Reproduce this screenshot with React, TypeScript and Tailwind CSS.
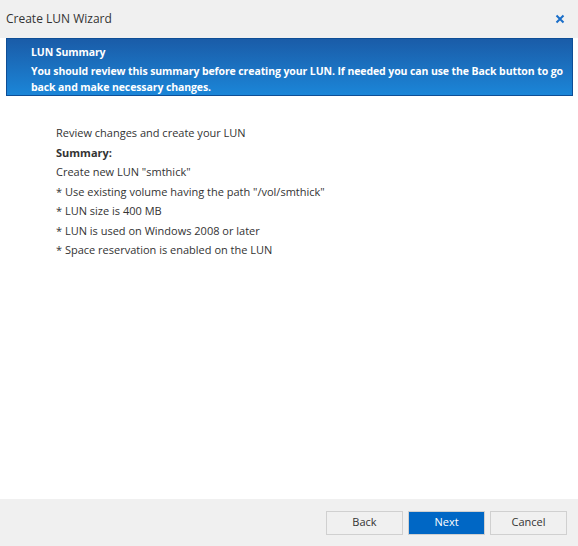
import React from 'react';

const summaryLines = [
  'Create new LUN "smthick"',
  '* Use existing volume having the path "/vol/smthick"',
  '* LUN size is 400 MB',
  '* LUN is used on Windows 2008 or later',
  '* Space reservation is enabled on the LUN',
];

export default function App() {
  return (
    <div
      className="flex h-[546px] w-[578px] flex-col bg-white text-[#333]"
      style={{ fontFamily: '"Open Sans", "Noto Sans", sans-serif' }}
    >
      <div className="flex h-[38px] items-center justify-between bg-[#f0f0f0] pl-[6px] pr-[13px]">
        <span className="text-[12px] text-[#333]">Create LUN Wizard</span>
        <svg width="10" height="10" viewBox="0 0 10 10">
          <path d="M1.5 1.5 L8.5 8.5 M8.5 1.5 L1.5 8.5" stroke="#1a6ec9" strokeWidth="2" />
        </svg>
      </div>

      <div className="ml-[6px] mr-[5px] h-[58px] border border-[#0e4e96] bg-gradient-to-b from-[#1a5ca8] to-[#1b86d8] pl-[24px] pr-[4px] pt-[5px] text-[10.5px] font-bold leading-[16px] tracking-[-0.1px] text-white">
        <div className="mb-[3px]">LUN Summary</div>
        <div className="whitespace-nowrap">
          You should review this summary before creating your LUN. If needed you can use the Back button to go
          <br />
          back and make necessary changes.
        </div>
      </div>

      <div className="flex-1 pl-[56px] pt-[27px] text-[11px] leading-[19.5px] text-[#333]">
        <div>Review changes and create your LUN</div>
        <div className="font-bold">Summary:</div>
        {summaryLines.map((line) => (
          <div key={line}>{line}</div>
        ))}
      </div>

      <div className="flex h-[47px] items-center justify-end gap-[5px] bg-[#f0f0f0] pr-[11px]">
        <button className="h-[24px] w-[77px] border border-[#d0d0d0] bg-[#f0f0f0] text-[11px] text-[#333]">
          Back
        </button>
        <button className="h-[24px] w-[77px] border border-[#d0d0d0] bg-[#0067c5] text-[11px] text-white">
          Next
        </button>
        <button className="h-[24px] w-[77px] border border-[#d0d0d0] bg-[#f0f0f0] text-[11px] text-[#333]">
          Cancel
        </button>
      </div>
    </div>
  );
}
